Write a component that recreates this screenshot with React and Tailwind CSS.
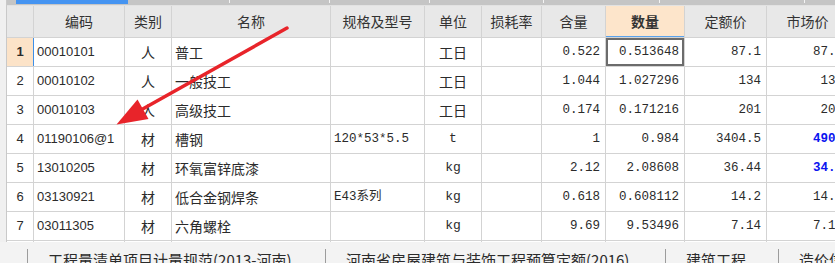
import React from "react";

const CJK = "font-['Noto_Sans_CJK_SC','Noto_Sans',sans-serif]";
const MONO = "font-['Liberation_Mono','Noto_Sans_CJK_SC',monospace]";
const SANS = "font-['Liberation_Sans','Noto_Sans_CJK_SC',sans-serif]";

const widths = [27, 91, 47, 159, 94, 57, 60, 64, 79, 82, 82];
const headers = ["", "编码", "类别", "名称", "规格及型号", "单位", "损耗率", "含量", "数量", "定额价", "市场价"];

const rows = [
  ["1", "00010101", "人", "普工", "", "工日", "", "0.522", "0.513648", "87.1", "87.1"],
  ["2", "00010102", "人", "一般技工", "", "工日", "", "1.044", "1.027296", "134", "134"],
  ["3", "00010103", "人", "高级技工", "", "工日", "", "0.174", "0.171216", "201", "201"],
  ["4", "01190106@1", "材", "槽钢", "120*53*5.5", "t", "", "1", "0.984", "3404.5", "4900"],
  ["5", "13010205", "材", "环氧富锌底漆", "", "kg", "", "2.12", "2.08608", "36.44", "34.5"],
  ["6", "03130921", "材", "低合金钢焊条", "E43系列", "kg", "", "0.618", "0.608112", "14.2", "14.2"],
  ["7", "03011305", "材", "六角螺栓", "", "kg", "", "9.69", "9.53496", "7.14", "7.14"],
];

function Cell({ w, className = "", children }) {
  return (
    <div
      className={`shrink-0 h-full flex items-center border-r border-[#d3d3d3] overflow-hidden whitespace-nowrap ${className}`}
      style={{ width: w }}
    >
      {children}
    </div>
  );
}

function HeaderRow() {
  return (
    <div className="flex h-[32px] shrink-0 border-b border-[#d3d3d3] bg-[#e8e8e8]">
      {headers.map((h, i) => (
        <Cell
          key={i}
          w={widths[i]}
          className={`justify-center text-[14px] text-[#333] ${CJK} ${
            i === 8 ? "bg-[#fde5cb] font-bold shadow-[inset_0_-1px_0_#5aa2ec]" : ""
          }`}
        >
          {h}
        </Cell>
      ))}
    </div>
  );
}

function DataRow({ r, idx }) {
  const first = idx === 0;
  const blue = idx === 3 || idx === 4;
  return (
    <div className="flex h-[29px] shrink-0 border-b border-[#d3d3d3] bg-white text-[#2b2b2b]">
      <Cell
        w={widths[0]}
        className={`justify-center text-[13px] ${SANS} ${first ? "bg-[#fce3c8] font-bold border-r-[#3d8fe8]" : ""}`}
      >
        {r[0]}
      </Cell>
      <Cell w={widths[1]} className={`pl-[3px] text-[13px] ${SANS}`}>{r[1]}</Cell>
      <Cell w={widths[2]} className={`justify-center text-[14px] ${CJK}`}>{r[2]}</Cell>
      <Cell w={widths[3]} className={`pl-[3px] text-[14px] ${CJK}`}>{r[3]}</Cell>
      <Cell w={widths[4]} className={`pl-[3px] text-[12.5px] ${MONO}`}>{r[4]}</Cell>
      <Cell w={widths[5]} className={`justify-center ${r[5] === "工日" ? `text-[14px] ${CJK}` : `text-[13px] ${MONO}`}`}>{r[5]}</Cell>
      <Cell w={widths[6]} className="">{r[6]}</Cell>
      <Cell w={widths[7]} className={`justify-end pr-[5px] text-[12.5px] ${MONO}`}>{r[7]}</Cell>
      <Cell
        w={widths[8]}
        className={`justify-end pr-[5px] text-[12.5px] ${MONO} ${first ? "shadow-[inset_0_0_0_2px_#6c6c6c]" : ""}`}
      >
        {r[8]}
      </Cell>
      <Cell w={widths[9]} className={`justify-end pr-[5px] text-[12.5px] ${MONO}`}>{r[9]}</Cell>
      <Cell
        w={widths[10]}
        className={`justify-end pr-[5px] text-[12.5px] ${MONO} ${blue ? "font-bold text-[#0a14f0]" : ""}`}
      >
        {r[10]}
      </Cell>
    </div>
  );
}

function TopStrip() {
  const segs = [102, 100, 100, 114, 116, 145];
  return (
    <div className="flex h-[6px] shrink-0 bg-[#c5c5c5] border-b border-[#e2e2e2]">
      <div className="w-[9px] shrink-0" />
      <div className="w-[112px] shrink-0 h-[4px] bg-[#4594f1]" />
      {segs.map((w, i) => (
        <div key={i} className="shrink-0 flex justify-end" style={{ width: w }}>
          <div className="w-px h-[3px] bg-[#f4f4f4]" />
        </div>
      ))}
    </div>
  );
}

function TabBar() {
  const tabs = [
    { w: "w-[298px]", t: "工程量清单项目计量规范(2013-河南)" },
    { w: "w-[340px]", t: "河南省房屋建筑与装饰工程预算定额(2016)" },
    { w: "w-[113px]", t: "建筑工程" },
    { w: "w-[120px]", t: "造价信息" },
  ];
  return (
    <div className={`flex h-[21px] shrink-0 bg-[#f3f3f3] text-[15px] text-[#2b2b2b] ${CJK}`}>
      <div className="w-[27px] shrink-0" />
      {tabs.map((tab, i) => (
        <div key={i} className={`${tab.w} shrink-0 flex`}>
          <div className="w-px bg-[#9c9c9c] mt-[7px] shrink-0" />
          <div className="pl-[20px] pt-[8px] leading-[20px] whitespace-nowrap">{tab.t}</div>
        </div>
      ))}
    </div>
  );
}

export default function App() {
  return (
    <div className="relative w-[835px] h-[263px] overflow-hidden bg-[#f3f3f3] flex flex-col">
      <div className="flex h-[242px] shrink-0">
        <div className="w-[7px] shrink-0 bg-[#f0f0f0] border-r border-[#c9c9c9]" />
        <div className="flex flex-col flex-1 overflow-hidden bg-white">
          <TopStrip />
          <HeaderRow />
          {rows.map((r, i) => (
            <DataRow key={i} r={r} idx={i} />
          ))}
          <div className="flex flex-1 bg-white">
            {widths.map((w, i) => (
              <Cell key={i} w={w} />
            ))}
          </div>
        </div>
      </div>
      <TabBar />
      <svg
        className="absolute inset-0 pointer-events-none"
        width="835"
        height="263"
        viewBox="0 0 835 263"
      >
        <line x1="287" y1="28" x2="140" y2="110.5" stroke="#e8242a" strokeWidth="3.5" strokeLinecap="round" />
        <polygon points="116.5,124.5 137.5,99.5 148.5,119" fill="#e8242a" />
      </svg>
    </div>
  );
}
